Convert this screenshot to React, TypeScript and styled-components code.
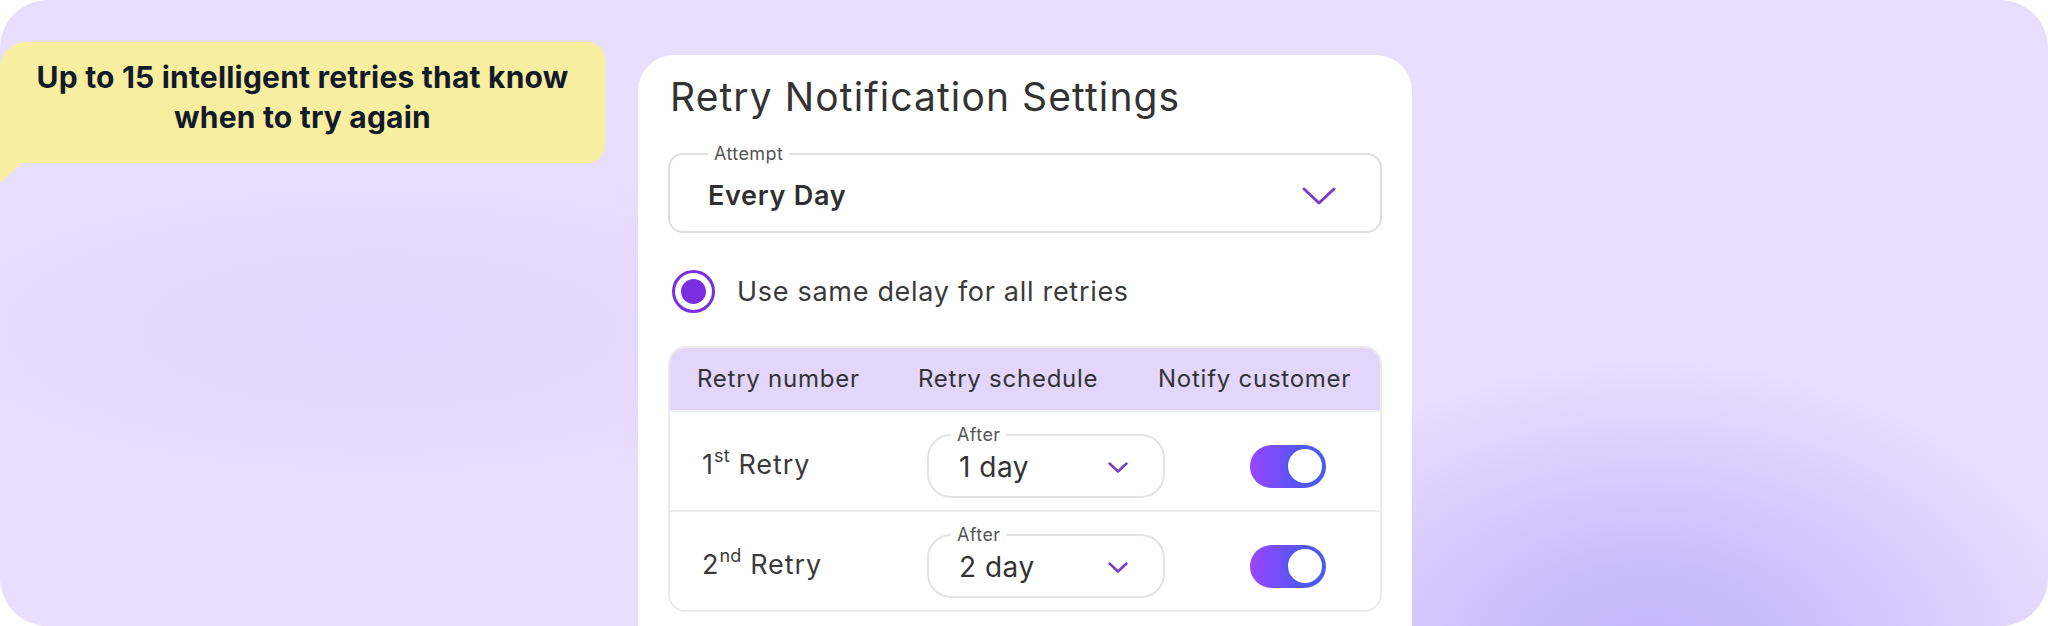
import React from "react";
import styled, { createGlobalStyle } from "styled-components";

const Global = createGlobalStyle`
  html, body { margin: 0; padding: 0; background: #ffffff; }
  body { font-family: Inter, "Noto Sans", sans-serif; }
  * { box-sizing: border-box; }
`;

const Frame = styled.div`
  width: 2048px;
  height: 626px;
  border-radius: 48px;
  overflow: hidden;
  display: flex;
  align-items: flex-start;
  background:
    radial-gradient(ellipse 450px 300px at 1650px 660px, #c4b8fc 0%, #c9befc 32%, rgba(232, 222, 254, 0) 100%),
    radial-gradient(ellipse 520px 170px at 380px 330px, rgba(224, 208, 252, 0.7) 0%, rgba(232, 222, 254, 0) 100%),
    #e8defe;
`;

const Bubble = styled.div`
  position: relative;
  flex: none;
  width: 605px;
  height: 121px;
  margin-top: 42px;
  background: #f8eea0;
  border-radius: 26px 18px 18px 0;
  display: flex;
  align-items: center;
  justify-content: center;
  text-align: center;
  font-family: Inter, sans-serif;
  font-weight: 700;
  font-size: 30px;
  line-height: 40px;
  letter-spacing: 0.2px;
  color: #131a2a;
  padding: 0 6px 12px;

  &::after {
    content: "";
    position: absolute;
    left: 0;
    top: 100%;
    border-top: 20px solid #f8eea0;
    border-right: 22px solid transparent;
  }
`;

const Card = styled.div`
  flex: none;
  width: 774px;
  margin-left: 33px;
  margin-top: 55px;
  background: #ffffff;
  border-radius: 36px;
  padding: 15px 30px 60px;
  display: flex;
  flex-direction: column;
  color: #363636;
`;

const Title = styled.h1`
  margin: 0 0 0 2px;
  font-family: Inter, sans-serif;
  font-weight: 400;
  font-size: 39px;
  line-height: 54px;
  letter-spacing: 1.1px;
  color: #333333;
`;

const Field = styled.div`
  position: relative;
  margin-top: 29px;
  height: 80px;
  border: 2px solid #dedede;
  border-radius: 15px;
  display: flex;
  align-items: center;
  justify-content: space-between;
  padding: 5px 43px 0 38px;
`;

const FieldLabel = styled.span<{ $left: number }>`
  position: absolute;
  top: 0;
  left: ${(p) => p.$left}px;
  transform: translateY(-58%);
  background: #ffffff;
  padding: 0 6px;
  font-size: 18px;
  letter-spacing: 0.4px;
  line-height: 1;
  color: #555555;
`;

const FieldValue = styled.span`
  font-size: 27px;
  font-weight: 600;
  letter-spacing: 0.7px;
  color: #2f2f2f;
`;

const RadioRow = styled.label`
  display: flex;
  align-items: center;
  gap: 22px;
  margin-top: 37px;
  padding-left: 4px;
  font-size: 27px;
  letter-spacing: 0.7px;
  color: #3a3a3a;
`;

const RadioDot = styled.span`
  width: 43px;
  height: 43px;
  border-radius: 50%;
  border: 3px solid #7b2de0;
  display: flex;
  align-items: center;
  justify-content: center;

  &::before {
    content: "";
    width: 25px;
    height: 25px;
    border-radius: 50%;
    background: #7b2de0;
  }
`;

const Table = styled.div`
  margin-top: 33px;
  border: 2px solid #ebebeb;
  border-radius: 18px;
  overflow: hidden;
`;

const Grid = styled.div<{ $head?: boolean }>`
  display: grid;
  grid-template-columns: 246px 235px 1fr;
  align-items: center;
  background: ${(p) => (p.$head ? "#e2d6fd" : "#ffffff")};
  height: ${(p) => (p.$head ? "62px" : "auto")};
  padding: ${(p) => (p.$head ? "0 0 2px" : "22px 0 12px")};
  & + & {
    border-top: 2px solid ${(p) => (p.$head ? "transparent" : "#eeeeee")};
  }
`;

const HeadCell = styled.div<{ $pad: number }>`
  padding-left: ${(p) => p.$pad}px;
  font-size: 24px;
  letter-spacing: 0.75px;
  color: #333333;
  white-space: nowrap;
`;

const RetryLabel = styled.div`
  padding-left: 32px;
  padding-bottom: 3px;
  font-size: 27px;
  letter-spacing: 0.9px;
  color: #3b3b3b;
  sup {
    font-size: 18px;
    letter-spacing: 0.3px;
    vertical-align: 12px;
    line-height: 0;
  }
`;

const SmallSelect = styled.div`
  position: relative;
  margin-left: 11px;
  width: 238px;
  height: 64px;
  border: 2px solid #e3e3e3;
  border-radius: 24px;
  display: flex;
  align-items: center;
  justify-content: space-between;
  padding: 2px 34px 0 30px;
`;

const SmallValue = styled.span`
  font-size: 28px;
  letter-spacing: 0.5px;
  color: #333333;
`;

const ToggleCell = styled.div`
  padding-left: 99px;
`;

const Toggle = styled.div`
  width: 76px;
  height: 43px;
  border-radius: 22px;
  background: linear-gradient(90deg, #9a45ff 0%, #5a55f2 60%, #4a5bed 100%);
  display: flex;
  align-items: center;
  justify-content: flex-end;
  padding-right: 2px;
`;

const Knob = styled.span`
  width: 38px;
  height: 38px;
  border-radius: 50%;
  background: #ffffff;
  border: 2.5px solid #4b5cec;
`;

const Chevron = ({ w, h, sw }: { w: number; h: number; sw: number }) => (
  <svg width={w} height={h} viewBox={`0 0 ${w} ${h}`} fill="none">
    <path
      d={`M${sw} ${sw} L${w / 2} ${h - sw} L${w - sw} ${sw}`}
      stroke="#7d3cc4"
      strokeWidth={sw}
      strokeLinecap="round"
      strokeLinejoin="round"
    />
  </svg>
);

const rows = [
  { n: "1", suf: "st", val: "1 day" },
  { n: "2", suf: "nd", val: "2 day" },
];

export default function App() {
  return (
    <>
      <Global />
      <Frame>
        <Bubble>
          Up to 15 intelligent retries that know
          <br />
          when to try again
        </Bubble>
        <Card>
          <Title>Retry Notification Settings</Title>
          <Field>
            <FieldLabel $left={38}>Attempt</FieldLabel>
            <FieldValue>Every Day</FieldValue>
            <Chevron w={36} h={20} sw={3} />
          </Field>
          <RadioRow>
            <RadioDot />
            Use same delay for all retries
          </RadioRow>
          <Table>
            <Grid $head>
              <HeadCell $pad={27}>Retry number</HeadCell>
              <HeadCell $pad={2}>Retry schedule</HeadCell>
              <HeadCell $pad={7}>Notify customer</HeadCell>
            </Grid>
            {rows.map((r) => (
              <Grid key={r.n}>
                <RetryLabel>
                  {r.n}
                  <sup>{r.suf}</sup> Retry
                </RetryLabel>
                <SmallSelect>
                  <FieldLabel $left={22}>After</FieldLabel>
                  <SmallValue>{r.val}</SmallValue>
                  <Chevron w={22} h={13} sw={2.5} />
                </SmallSelect>
                <ToggleCell>
                  <Toggle>
                    <Knob />
                  </Toggle>
                </ToggleCell>
              </Grid>
            ))}
          </Table>
        </Card>
      </Frame>
    </>
  );
}
